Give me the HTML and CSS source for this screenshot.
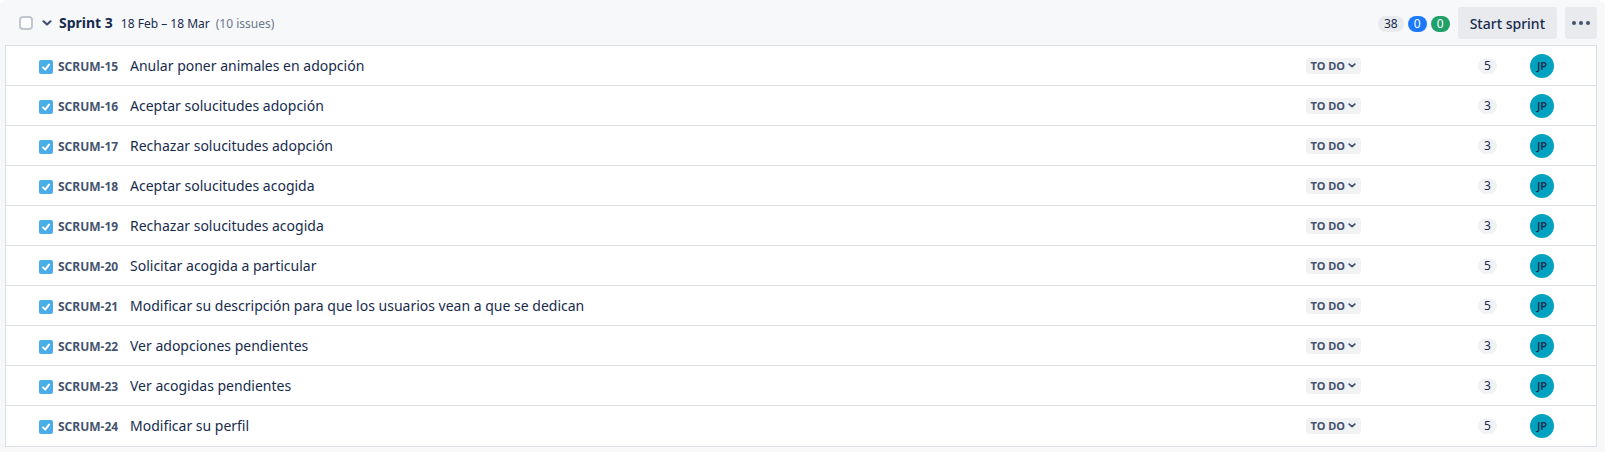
FILE: index.html
```
<!DOCTYPE html>
<html lang="es">
<head>
<meta charset="utf-8">
<title>Backlog</title>
<link rel="stylesheet" href="styles.css">
</head>
<body>
<svg class="sprite" aria-hidden="true">
  <symbol id="chevron" viewBox="0 0 10 6"><path d="M1.5 1.3 5 4.5 8.5 1.3" fill="none" stroke="currentColor" stroke-width="2.2" stroke-linecap="round" stroke-linejoin="round"/></symbol>
  <symbol id="task" viewBox="0 0 14 14"><rect width="14" height="14" rx="2" fill="#4bade8"/><path d="M4 7.4 6.2 9.6 10 4.6" fill="none" stroke="#fff" stroke-width="2" stroke-linecap="round" stroke-linejoin="round"/></symbol>
</svg>
<main class="sprint">
  <header class="sprint-header">
    <input class="select-all" type="checkbox" aria-label="Select all issues in Sprint 3">
    <button class="toggle" type="button" aria-label="Collapse Sprint 3" aria-expanded="true"><svg class="chevron"><use href="#chevron"/></svg></button>
    <h2 class="sprint-name">Sprint 3</h2>
    <span class="dates">18 Feb – 18 Mar</span>
    <span class="count">(10 issues)</span>
    <div class="totals">
      <span class="pill pill-todo">38</span>
      <span class="pill pill-progress">0</span>
      <span class="pill pill-done">0</span>
    </div>
    <button class="button" type="button">Start sprint</button>
    <button class="button button-more" type="button" aria-label="More actions"><svg class="dots" viewBox="0 0 18 4"><circle cx="2" cy="2" r="2"/><circle cx="9" cy="2" r="2"/><circle cx="16" cy="2" r="2"/></svg></button>
  </header>
  <ul class="issues">
    <li class="issue"><svg class="task"><use href="#task"/></svg><a class="key" href="#SCRUM-15">SCRUM-15</a><span class="title">Anular poner animales en adopción</span><button class="status" type="button">TO DO<svg class="chevron chevron-small"><use href="#chevron"/></svg></button><span class="pill points">5</span><span class="avatar">JP</span></li>
    <li class="issue"><svg class="task"><use href="#task"/></svg><a class="key" href="#SCRUM-16">SCRUM-16</a><span class="title">Aceptar solucitudes adopción</span><button class="status" type="button">TO DO<svg class="chevron chevron-small"><use href="#chevron"/></svg></button><span class="pill points">3</span><span class="avatar">JP</span></li>
    <li class="issue"><svg class="task"><use href="#task"/></svg><a class="key" href="#SCRUM-17">SCRUM-17</a><span class="title">Rechazar solucitudes adopción</span><button class="status" type="button">TO DO<svg class="chevron chevron-small"><use href="#chevron"/></svg></button><span class="pill points">3</span><span class="avatar">JP</span></li>
    <li class="issue"><svg class="task"><use href="#task"/></svg><a class="key" href="#SCRUM-18">SCRUM-18</a><span class="title">Aceptar solucitudes acogida</span><button class="status" type="button">TO DO<svg class="chevron chevron-small"><use href="#chevron"/></svg></button><span class="pill points">3</span><span class="avatar">JP</span></li>
    <li class="issue"><svg class="task"><use href="#task"/></svg><a class="key" href="#SCRUM-19">SCRUM-19</a><span class="title">Rechazar solucitudes acogida</span><button class="status" type="button">TO DO<svg class="chevron chevron-small"><use href="#chevron"/></svg></button><span class="pill points">3</span><span class="avatar">JP</span></li>
    <li class="issue"><svg class="task"><use href="#task"/></svg><a class="key" href="#SCRUM-20">SCRUM-20</a><span class="title">Solicitar acogida a particular</span><button class="status" type="button">TO DO<svg class="chevron chevron-small"><use href="#chevron"/></svg></button><span class="pill points">5</span><span class="avatar">JP</span></li>
    <li class="issue"><svg class="task"><use href="#task"/></svg><a class="key" href="#SCRUM-21">SCRUM-21</a><span class="title">Modificar su descripción para que los usuarios vean a que se dedican</span><button class="status" type="button">TO DO<svg class="chevron chevron-small"><use href="#chevron"/></svg></button><span class="pill points">5</span><span class="avatar">JP</span></li>
    <li class="issue"><svg class="task"><use href="#task"/></svg><a class="key" href="#SCRUM-22">SCRUM-22</a><span class="title">Ver adopciones pendientes</span><button class="status" type="button">TO DO<svg class="chevron chevron-small"><use href="#chevron"/></svg></button><span class="pill points">3</span><span class="avatar">JP</span></li>
    <li class="issue"><svg class="task"><use href="#task"/></svg><a class="key" href="#SCRUM-23">SCRUM-23</a><span class="title">Ver acogidas pendientes</span><button class="status" type="button">TO DO<svg class="chevron chevron-small"><use href="#chevron"/></svg></button><span class="pill points">3</span><span class="avatar">JP</span></li>
    <li class="issue"><svg class="task"><use href="#task"/></svg><a class="key" href="#SCRUM-24">SCRUM-24</a><span class="title">Modificar su perfil</span><button class="status" type="button">TO DO<svg class="chevron chevron-small"><use href="#chevron"/></svg></button><span class="pill points">5</span><span class="avatar">JP</span></li>
  </ul>
</main>
</body>
</html>
```
FILE: styles.css
```
* { box-sizing: border-box; }
body {
  margin: 0;
  background: #fff;
  color: #172b4d;
  font: 14px/20px "Noto Sans", sans-serif;
}
button {
  border: 0;
  margin: 0;
  padding: 0;
  font: inherit;
  color: inherit;
  cursor: pointer;
}
svg { display: block; flex: none; }
.sprite { position: absolute; width: 0; height: 0; }
.sprint {
  margin-right: 4px;
  padding: 7px 8px 5px 5px;
  background: #f7f8fa;
  border-radius: 6px 6px 0 0;
}
.sprint-header {
  display: flex;
  align-items: center;
  height: 32px;
  margin-bottom: 6px;
  padding-left: 14px;
  white-space: nowrap;
}
.select-all {
  appearance: none;
  width: 14px;
  height: 14px;
  margin: 0 9px 0 0;
  border: 2px solid #c1c7d0;
  border-radius: 4px;
  background: #fff;
}
.select-all:checked { background: #0c66e4; border-color: #0c66e4; }
.toggle {
  display: flex;
  align-items: center;
  justify-content: center;
  width: 10px;
  height: 20px;
  margin-right: 7px;
  background: none;
  color: #42526e;
}
.chevron { width: 10px; height: 6px; }
.chevron-small { width: 8px; height: 5px; }
.sprint-name { margin: 0 8px 0 0; font-size: 14px; font-weight: 700; }
.dates, .count, .totals { padding-top: 2px; }
.dates { margin-right: 6px; font-size: 12px; }
.count { font-size: 12px; color: #6b778c; }
.totals { display: flex; gap: 4px; margin: 0 8px 0 auto; }
.pill {
  min-width: 19px;
  padding: 0 6px;
  border-radius: 8px;
  font-size: 12px;
  line-height: 16px;
  text-align: center;
}
.pill-todo { background: #e9eaee; }
.pill-progress { background: #1d7afc; color: #fff; }
.pill-done { background: #22a06b; color: #fff; }
.button {
  height: 32px;
  padding: 2px 12px 0;
  border-radius: 3px;
  background: #e9eaee;
  line-height: 30px;
  font-weight: 500;
}
.button-more {
  display: flex;
  align-items: center;
  justify-content: center;
  width: 32px;
  margin-left: 8px;
  padding: 0;
}
.dots { width: 18px; height: 4px; fill: #42526e; }
.issues {
  margin: 0;
  padding: 0;
  border: 1px solid #dcdfe4;
  background: #fff;
  list-style: none;
}
.issue {
  display: flex;
  align-items: center;
  height: 40px;
  padding: 0 42px 0 33px;
  border-bottom: 1px solid #dcdfe4;
}
.issue:last-child { border-bottom-color: transparent; }
.task, .key { margin-top: 3px; }
.task { width: 14px; height: 14px; margin-right: 5px; }
.key {
  width: 72px;
  color: #44546f;
  font-size: 12px;
  font-weight: 700;
  text-decoration: none;
}
.title {
  flex: 1;
  min-width: 0;
  overflow: hidden;
  text-overflow: ellipsis;
  white-space: nowrap;
}
.status {
  display: flex;
  align-items: center;
  gap: 3px;
  height: 16px;
  margin-right: 117px;
  padding: 0 5px;
  border-radius: 3px;
  background: #f1f2f4;
  color: #44546f;
  font-size: 11px;
  font-weight: 700;
  line-height: 16px;
  white-space: nowrap;
}
.points { margin-right: 33px; background: #f1f2f4; }
.avatar {
  width: 24px;
  height: 24px;
  border-radius: 50%;
  background: #00a3bf;
  font-size: 11px;
  font-weight: 600;
  line-height: 24px;
  text-align: center;
}
```
